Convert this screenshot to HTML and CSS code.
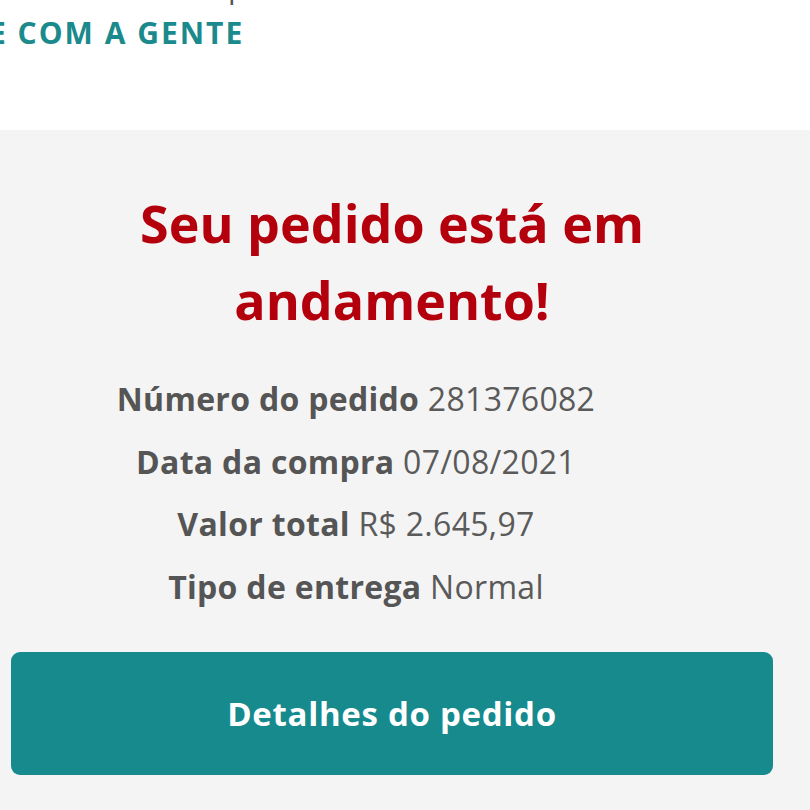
FILE: index.html
```html
<!DOCTYPE html>
<html lang="pt-BR">
<head>
<meta charset="utf-8">
<link rel="stylesheet" href="styles.css">
</head>
<body>
<header class="top">
  <div class="top-prev">p</div>
  <div class="top-link">E COM A GENTE</div>
</header>
<main class="status">
  <h1 class="title">Seu pedido está em<br>andamento!</h1>
  <ul class="info">
    <li><b>Número do pedido</b> 281376082</li>
    <li><b>Data da compra</b> 07/08/2021</li>
    <li><b>Valor total</b> R$ 2.645,97</li>
    <li><b>Tipo de entrega</b> Normal</li>
  </ul>
  <div class="actions">
    <button class="btn">Detalhes do pedido</button>
  </div>
</main>
</body>
</html>
```
FILE: styles.css
```css
html, body {
  margin: 0;
  padding: 0;
  background: #f4f4f4;
  font-family: "Open Sans", "Lato", sans-serif;
  overflow: hidden;
}
.top {
  background: #fff;
  height: 130px;
  position: relative;
  overflow: hidden;
}
.top-prev {
  position: absolute;
  left: 228px;
  top: -34px;
  font-size: 30px;
  color: #555;
}
.top-link {
  position: absolute;
  left: -11px;
  top: 12px;
  font-size: 30px;
  font-weight: 700;
  letter-spacing: 2px;
  color: #1a8a8c;
  white-space: nowrap;
}
.status {
  padding-top: 54px;
  width: 784px;
  text-align: center;
}
.title {
  margin: 0;
  font-size: 52px;
  line-height: 77px;
  font-weight: 700;
  color: #b3000c;
}
.info {
  list-style: none;
  margin: 30px 0 0;
  padding: 0 72px 0 0;
  color: #5a5a5a;
  font-size: 32px;
  line-height: 62.5px;
  letter-spacing: 0.3px;
}
.info b {
  font-weight: 700;
  color: #555;
}
.actions {
  padding: 34px 0 0 11px;
}
.btn {
  display: block;
  width: 762px;
  height: 123px;
  border: 0;
  border-radius: 9px;
  background: #168a8d;
  color: #fff;
  font-family: inherit;
  font-size: 33px;
  font-weight: 700;
  letter-spacing: 0.7px;
}
```
